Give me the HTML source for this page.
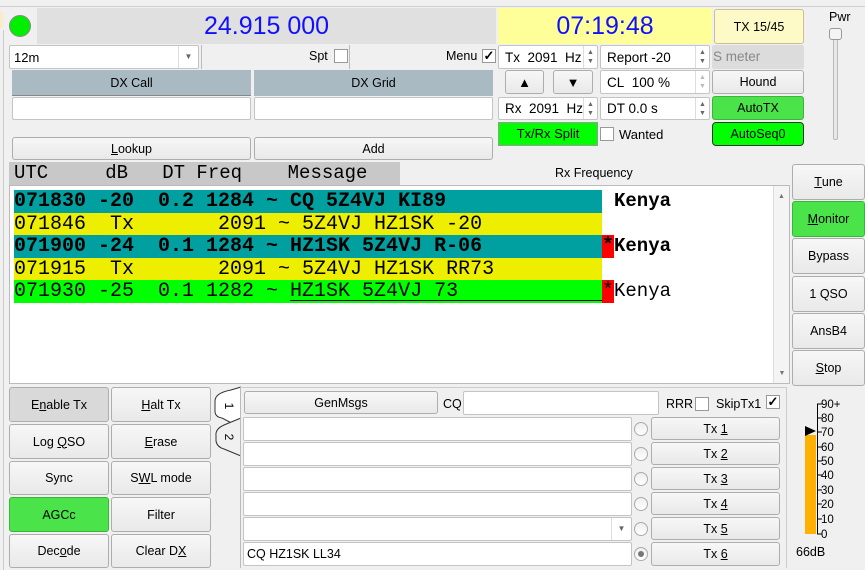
<!DOCTYPE html>
<html><head><meta charset="utf-8"><style>
*{box-sizing:border-box;margin:0;padding:0}
body{width:865px;height:568px;overflow:hidden;background:#f0f0f0;font-family:"Liberation Sans",sans-serif;font-size:12.5px;color:#000;position:relative}
.a{position:absolute}
.btn{position:absolute;border:1px solid #adadad;border-radius:3px;background:linear-gradient(#f7f7f7,#e9e9e9);display:flex;align-items:center;justify-content:center;font-size:12.5px;white-space:pre}
.inp{position:absolute;background:#fff;border:1px solid #c4c4c4;border-radius:2px}
.spin{position:absolute;background:#fff;border:1px solid #c4c4c4;border-radius:2px;padding-left:6px;display:flex;align-items:center;font-size:13.5px}
.spin .ar{position:absolute;right:0;top:0;bottom:0;width:14px;border-left:1px solid #ddd;font-size:7px;color:#666;display:flex;flex-direction:column;justify-content:center;align-items:center;line-height:9px}
.cb{position:absolute;width:14px;height:14px;border:1px solid #999;background:#fff;font-size:13px;line-height:12px;text-align:center;font-weight:bold}
.mono{font-family:"Liberation Mono",monospace;font-size:20px;white-space:pre}
.row{position:absolute;left:14px;width:588px;height:23px;line-height:23px}
.rad{position:absolute;left:634px;width:14px;height:14px;border-radius:50%;border:1px solid #aaa;background:linear-gradient(#eee,#fff)}
u{text-decoration:underline}
</style></head><body>
<div class="a" style="left:0;top:6px;width:865px;height:1px;background:#d0d0d0"></div>
<div class="a" style="left:0;top:12px;width:3px;height:16px;background:#fbecc8"></div>
<div class="a" style="left:0;top:30px;width:4px;height:540px;border-right:1px solid #ccc"></div>
<div class="a" style="left:9px;top:15px;width:22px;height:22px;border-radius:50%;background:#00ee00;border:1px solid #888"></div>
<div class="a" style="left:37px;top:8px;width:459px;height:36px;background:#e0e0e0;color:#1010ff;font-size:25px;text-align:center;line-height:36px">24.915 000</div>
<div class="a" style="left:498px;top:8px;width:214px;height:36px;background:#ffff99;color:#1010ff;font-size:25px;text-align:center;line-height:36px">07:19:48</div>
<div class="btn" style="left:714px;top:9px;width:90px;height:35px;background:#fefac8;border-color:#c8c090">TX 15/45</div>
<div class="a" style="left:829px;top:10px;font-size:12.5px">Pwr</div>
<div class="a" style="left:833px;top:38px;width:5px;height:102px;border:1px solid #bbb;border-radius:2px;background:#e8e8e8"></div>
<div class="a" style="left:829px;top:28px;width:13px;height:12px;border:1px solid #999;border-radius:3px;background:#f4f4f4"></div>

<div class="inp" style="left:9px;top:45px;width:190px;height:24px;padding:4px 4px;font-size:13px">12m<div class="a" style="right:0;top:0;width:20px;height:22px;border-left:1px solid #ddd;font-size:8px;color:#666;text-align:center;line-height:22px">▼</div></div>
<div class="a" style="left:201px;top:45px;width:1px;height:24px;background:#bbb"></div>
<div class="a" style="left:309px;top:49px">Spt</div><div class="cb" style="left:334px;top:49px"></div>
<div class="a" style="left:349px;top:45px;width:1px;height:24px;background:#bbb"></div>
<div class="a" style="left:446px;top:49px">Menu</div><div class="cb" style="left:482px;top:49px">✓</div>

<div class="a" style="left:12px;top:70px;width:239px;height:26px;background:#a9bac3;border-bottom:1px solid #888;text-align:center;line-height:26px">DX Call</div>
<div class="a" style="left:254px;top:70px;width:239px;height:26px;background:#a9bac3;text-align:center;line-height:26px">DX Grid</div>
<div class="inp" style="left:12px;top:97px;width:239px;height:23px"></div>
<div class="inp" style="left:254px;top:97px;width:239px;height:23px"></div>
<div class="btn" style="left:12px;top:137px;width:239px;height:23px"><u>L</u>ookup</div>
<div class="btn" style="left:254px;top:137px;width:239px;height:23px">Add</div>

<div class="spin" style="left:498px;top:45px;width:100px;height:24px">Tx&nbsp; 2091&nbsp; Hz<div class="ar">▲<br>▼</div></div>
<div class="spin" style="left:600px;top:45px;width:110px;height:24px">Report -20<div class="ar">▲<br>▼</div></div>
<div class="a" style="left:712px;top:45px;width:92px;height:24px;background:#dcdcdc;border-radius:2px;color:#888;font-size:13.5px;line-height:24px;padding-left:1px">S meter</div>
<div class="btn" style="left:505px;top:70px;width:39px;height:24px;font-size:13px">▲</div>
<div class="btn" style="left:553px;top:70px;width:40px;height:24px;font-size:13px">▼</div>
<div class="spin" style="left:600px;top:70px;width:110px;height:24px">CL&nbsp; 100 %<div class="ar" style="color:#bbb">▲<br>▼</div></div>
<div class="btn" style="left:712px;top:70px;width:92px;height:24px">Hound</div>
<div class="spin" style="left:498px;top:97px;width:100px;height:23px">Rx&nbsp; 2091&nbsp; Hz<div class="ar">▲<br>▼</div></div>
<div class="spin" style="left:600px;top:97px;width:110px;height:23px">DT 0.0 s<div class="ar">▲<br>▼</div></div>
<div class="btn" style="left:712px;top:96px;width:92px;height:24px;background:#4ae34a;border-color:#3cb43c">AutoTX</div>
<div class="a" style="left:498px;top:122px;width:100px;height:24px;background:#00ff00;border:1px solid #999;text-align:center;line-height:22px;font-size:13px">Tx/Rx Split</div>
<div class="cb" style="left:600px;top:127px"></div><div class="a" style="left:619px;top:127px;font-size:13px">Wanted</div>
<div class="a" style="left:712px;top:122px;width:92px;height:24px;background:#00ff00;border:1px solid #333;border-radius:4px;text-align:center;line-height:22px">AutoSeq0</div>

<div class="a mono" style="left:9px;top:162px;width:391px;height:23px;background:#c8c8c8;line-height:23px;padding-left:5px;font-size:19px">UTC     dB   DT Freq    Message</div>
<div class="a" style="left:555px;top:166px">Rx Frequency</div>

<div class="a" style="left:9px;top:185px;width:781px;height:199px;background:#fff;border:1px solid #bbb"></div>
<div class="a" style="left:773px;top:186px;width:16px;height:197px;background:#f4f4f4;border-left:1px solid #ddd;font-size:7px;color:#777;text-align:center"><div style="margin-top:7px">▲</div><div style="position:absolute;bottom:6px;width:16px">▼</div></div>
<div class="row mono" style="top:190px;background:#00a0a0;font-weight:bold">071830 -20  0.2 1284 ~ CQ 5Z4VJ KI89</div>
<div class="a mono" style="left:614px;top:190px;line-height:23px;font-weight:bold;font-size:19px">Kenya</div>
<div class="row mono" style="top:213px;background:#eeee00">071846  Tx       2091 ~ 5Z4VJ HZ1SK -20</div>
<div class="row mono" style="top:235px;background:#00a0a0;font-weight:bold">071900 -24  0.1 1284 ~ HZ1SK 5Z4VJ R-06</div>
<div class="a mono" style="left:602px;top:235px;width:12px;height:23px;background:#ff0000;line-height:23px;font-weight:bold">*</div>
<div class="a mono" style="left:614px;top:235px;line-height:23px;font-weight:bold;font-size:19px">Kenya</div>
<div class="row mono" style="top:258px;background:#eeee00">071915  Tx       2091 ~ 5Z4VJ HZ1SK RR73</div>
<div class="row mono" style="top:280px;background:#00ff00">071930 -25  0.1 1282 ~ HZ1SK 5Z4VJ 73</div>
<div class="a" style="left:290px;top:300px;width:312px;height:1px;background:#000"></div>
<div class="a mono" style="left:602px;top:280px;width:12px;height:23px;background:#ff0000;line-height:23px">*</div>
<div class="a mono" style="left:614px;top:280px;line-height:23px;font-size:19px">Kenya</div>

<div class="btn" style="left:792px;top:164px;width:73px;height:36px"><u>T</u>une</div>
<div class="btn" style="left:792px;top:201px;width:73px;height:36px;background:#4ae34a;border-color:#3cb43c"><u>M</u>onitor</div>
<div class="btn" style="left:792px;top:238px;width:73px;height:36px">Bypass</div>
<div class="btn" style="left:792px;top:276px;width:73px;height:36px">1 QSO</div>
<div class="btn" style="left:792px;top:313px;width:73px;height:36px">AnsB4</div>
<div class="btn" style="left:792px;top:350px;width:73px;height:36px"><u>S</u>top</div>

<div class="btn" style="left:9px;top:387px;width:100px;height:35px;background:#d9d9d9">E<u>n</u>able Tx</div>
<div class="btn" style="left:111px;top:387px;width:100px;height:35px"><u>H</u>alt Tx</div>
<div class="btn" style="left:9px;top:424px;width:100px;height:35px">Log <u>Q</u>SO</div>
<div class="btn" style="left:111px;top:424px;width:100px;height:35px"><u>E</u>rase</div>
<div class="btn" style="left:9px;top:461px;width:100px;height:34px">Sync</div>
<div class="btn" style="left:111px;top:461px;width:100px;height:34px">S<u>W</u>L mode</div>
<div class="btn" style="left:9px;top:497px;width:100px;height:35px;background:#4ae34a;border-color:#3cb43c">AGCc</div>
<div class="btn" style="left:111px;top:497px;width:100px;height:35px">Filter</div>
<div class="btn" style="left:9px;top:534px;width:100px;height:34px">Dec<u>o</u>de</div>
<div class="btn" style="left:111px;top:534px;width:100px;height:34px">Clear D<u>X</u></div>

<svg class="a" style="left:212px;top:386px" width="32" height="72"><path d="M29 1 L19 4 Q3 7 3 15 L3 25 Q3 31 10 32 L29 42" fill="#fff" stroke="#333"/><path d="M29 32 L12 39 Q3 43 4 50 L4 55 Q5 61 12 63 L29 70" fill="#f0f0f0" stroke="#333"/><text x="16" y="23" font-size="12" font-family="Liberation Sans" transform="rotate(90 16 20)" text-anchor="middle">1</text><text x="16" y="54" font-size="12" font-family="Liberation Sans" transform="rotate(90 16 51)" text-anchor="middle">2</text></svg>
<div class="a" style="left:240px;top:387px;width:546px;height:181px;border-left:1px solid #bbb;border-top:1px solid #ccc"></div>
<div class="btn" style="left:244px;top:391px;width:194px;height:23px">GenMsgs</div>
<div class="a" style="left:443px;top:397px">CQ</div>
<div class="inp" style="left:463px;top:391px;width:196px;height:24px"></div>
<div class="a" style="left:666px;top:397px">RRR</div><div class="cb" style="left:695px;top:397px"></div>
<div class="a" style="left:716px;top:397px">SkipTx1</div><div class="cb" style="left:766px;top:395px">✓</div>

<div class="inp" style="left:243px;top:417px;width:389px;height:24px"></div>
<div class="inp" style="left:243px;top:442px;width:389px;height:24px"></div>
<div class="inp" style="left:243px;top:467px;width:389px;height:24px"></div>
<div class="inp" style="left:243px;top:492px;width:389px;height:24px"></div>
<div class="inp" style="left:243px;top:517px;width:389px;height:24px"><div class="a" style="right:0;top:0;width:20px;height:22px;border-left:1px solid #ddd;font-size:8px;color:#666;text-align:center;line-height:22px">▼</div></div>
<div class="inp" style="left:243px;top:542px;width:389px;height:24px;padding:4px 3px;font-size:12.5px">CQ HZ1SK LL34</div>
<div class="rad" style="top:422px"></div><div class="rad" style="top:447px"></div><div class="rad" style="top:472px"></div><div class="rad" style="top:497px"></div><div class="rad" style="top:522px"></div>
<div class="rad" style="top:547px"><div style="width:6px;height:6px;border-radius:50%;background:#777;margin:3px"></div></div>
<div class="btn" style="left:651px;top:417px;width:129px;height:23px">Tx <u>1</u></div>
<div class="btn" style="left:651px;top:442px;width:129px;height:23px">Tx <u>2</u></div>
<div class="btn" style="left:651px;top:467px;width:129px;height:23px">Tx <u>3</u></div>
<div class="btn" style="left:651px;top:492px;width:129px;height:23px">Tx <u>4</u></div>
<div class="btn" style="left:651px;top:517px;width:129px;height:23px">Tx <u>5</u></div>
<div class="btn" style="left:651px;top:542px;width:129px;height:24px">Tx <u>6</u></div>

<div class="a" style="left:786px;top:387px;width:1px;height:181px;background:#ccc"></div>
<svg class="a" style="left:795px;top:395px" width="70" height="150" font-family="Liberation Sans" font-size="11.5">
<rect x="10" y="40" width="11" height="99" fill="#ffb000"/>
<path d="M10 31 L21 36 L10 41 Z" fill="#000"/>
<line x1="22.5" y1="9" x2="22.5" y2="139" stroke="#000"/>
<g stroke="#000">
<line x1="22" y1="9" x2="27" y2="9"/><line x1="22" y1="23" x2="27" y2="23"/><line x1="22" y1="37" x2="27" y2="37"/><line x1="22" y1="52" x2="27" y2="52"/><line x1="22" y1="66" x2="27" y2="66"/><line x1="22" y1="80" x2="27" y2="80"/><line x1="22" y1="95" x2="27" y2="95"/><line x1="22" y1="109" x2="27" y2="109"/><line x1="22" y1="124" x2="27" y2="124"/><line x1="22" y1="139" x2="27" y2="139"/></g>
<text x="26" y="13">90+</text><text x="26" y="27">80</text><text x="26" y="41">70</text><text x="26" y="56">60</text><text x="26" y="70">50</text><text x="26" y="84">40</text><text x="26" y="99">30</text><text x="26" y="113">20</text><text x="26" y="128">10</text><text x="26" y="143">0</text>
</svg>
<div class="a" style="left:796px;top:545px">66dB</div>
</body></html>
